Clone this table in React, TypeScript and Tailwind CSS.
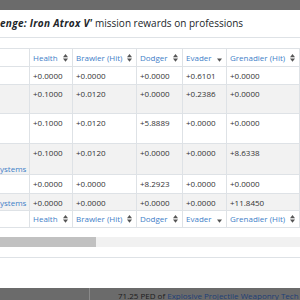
import React from 'react';

type Row = {
  height: string;
  striped: boolean;
  lead?: React.ReactNode;
  values: string[];
};

const grid = 'grid grid-cols-[30px_43px_64px_46px_44px_73px]';

const headers: { label: string; sort: 'both' | 'down' }[] = [
  { label: 'Health', sort: 'both' },
  { label: 'Brawler (Hit)', sort: 'both' },
  { label: 'Dodger', sort: 'both' },
  { label: 'Evader', sort: 'down' },
  { label: 'Grenadier (Hit)', sort: 'both' },
];

const rows: Row[] = [
  {
    height: 'h-[18px]',
    striped: false,
    values: ['+0.0000', '+0.0000', '+0.0000', '+0.6101', '+0.0000'],
  },
  {
    height: 'h-[29px]',
    striped: true,
    values: ['+0.1000', '+0.0120', '+0.0000', '+0.2386', '+0.0000'],
  },
  {
    height: 'h-[30px]',
    striped: false,
    values: ['+0.1000', '+0.0120', '+5.8889', '+0.0000', '+0.0000'],
  },
  {
    height: 'h-[31px]',
    striped: true,
    lead: <span className="block pt-[16px] text-[#3f80c8]">ystems</span>,
    values: ['+0.1000', '+0.0120', '+0.0000', '+0.0000', '+8.6338'],
  },
  {
    height: 'h-[19px]',
    striped: false,
    values: ['+0.0000', '+0.0000', '+8.2923', '+0.0000', '+0.0000'],
  },
  {
    height: 'h-[17px]',
    striped: true,
    lead: <span className="block text-[#3f80c8]">ystems</span>,
    values: ['+0.0000', '+0.0000', '+0.0000', '+0.0000', '+11.8450'],
  },
];

const SortIcon = ({ type }: { type: 'both' | 'down' }) => (
  <svg width="5" height="8" viewBox="0 0 5 8" className="shrink-0">
    {type === 'both' && <path d="M2.5 0 L5 3.2 L0 3.2 Z" fill="#555" />}
    <path d="M0 4.6 L5 4.6 L2.5 7.8 Z" fill="#555" />
  </svg>
);

const HeaderRow = ({ border }: { border: string }) => (
  <div className={`${grid} h-[18px] ${border} border-[#dee2e6]`}>
    <div className="border-r border-[#dee2e6]" />
    {headers.map(h => (
      <div
        key={h.label}
        className="flex items-center justify-between pl-[3px] pr-[4px] border-r border-[#dee2e6] text-[#3f80c8]"
      >
        <span>{h.label}</span>
        <SortIcon type={h.sort} />
      </div>
    ))}
  </div>
);

export default function App() {
  return (
    <div className="w-[300px] h-[300px] overflow-hidden bg-[#6b6b6b] flex flex-col font-['Open_Sans',sans-serif]">
      <div className="h-[10px] shrink-0" />

      <div className="h-[278px] shrink-0 bg-white flex flex-col">
        <div className="h-[28px] shrink-0 flex items-center border-b border-[#dee2e6] text-[10px] text-[#212529] whitespace-nowrap overflow-hidden">
          <span className="font-bold italic tracking-[0.3px]">enge: Iron Atrox V'</span>
          <span>&nbsp;mission rewards on professions</span>
        </div>

        <div className="pt-[10px] text-[8px] leading-[12px] text-[#333]">
          <HeaderRow border="border-t" />

          {rows.map((row, i) => (
            <div
              key={i}
              className={`${grid} ${row.height} border-t border-[#dee2e6] ${
                row.striped ? 'bg-[#f2f2f2]' : 'bg-white'
              }`}
            >
              <div className="border-r border-[#dee2e6] pt-[3px] overflow-hidden whitespace-nowrap">
                {row.lead}
              </div>
              {row.values.map((v, j) => (
                <div
                  key={j}
                  className="pl-[3px] pt-[3px] border-r border-[#dee2e6] whitespace-nowrap"
                >
                  {v}
                </div>
              ))}
            </div>
          ))}

          <HeaderRow border="border-y" />

          <div className="mt-[9px] h-[10px] bg-[#f1f1f1]">
            <div className="w-[96px] h-full bg-[#c1c1c1]" />
          </div>
        </div>

        <div className="mt-[10px] border-t border-[#dee2e6] flex-1" />
      </div>

      <div className="flex-1 flex text-[8px] leading-[10px] whitespace-nowrap overflow-hidden">
        <div className="w-[90px] shrink-0 border-r border-[#8a8a8a]" />
        <div className="pl-[28px] pt-[3px] text-[#1c1c1c]">
          71.25 PED of{' '}
          <span className="text-[#1f3f77] underline">
            Explosive Projectile Weaponry Tech
          </span>
        </div>
      </div>
    </div>
  );
}
